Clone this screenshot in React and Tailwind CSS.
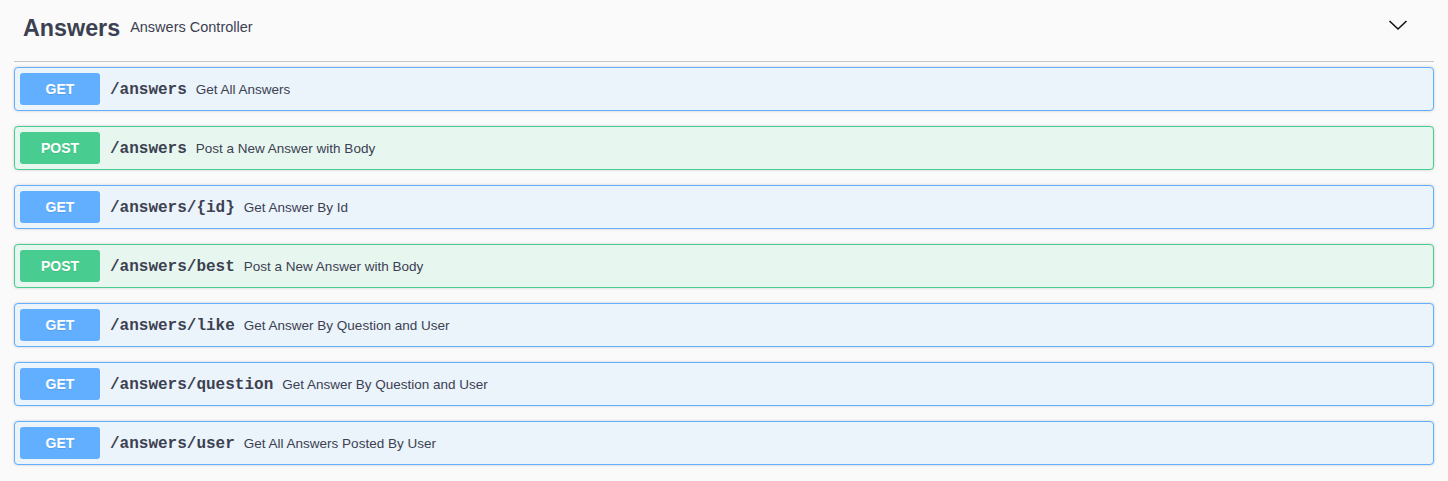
import React from "react";

const rows = [
  { m: "GET", p: "/answers", d: "Get All Answers" },
  { m: "POST", p: "/answers", d: "Post a New Answer with Body" },
  { m: "GET", p: "/answers/{id}", d: "Get Answer By Id" },
  { m: "POST", p: "/answers/best", d: "Post a New Answer with Body" },
  { m: "GET", p: "/answers/like", d: "Get Answer By Question and User" },
  { m: "GET", p: "/answers/question", d: "Get Answer By Question and User" },
  { m: "GET", p: "/answers/user", d: "Get All Answers Posted By User" },
];

function Row({ m, p, d }) {
  const get = m === "GET";
  return (
    <div
      className={
        "mb-[15px] flex items-center rounded-[4px] border p-[5px] shadow-[0_0_3px_rgba(0,0,0,0.19)] " +
        (get
          ? "border-[#61affe] bg-[#ebf3fb]"
          : "border-[#49cc90] bg-[#e8f6f0]")
      }
    >
      <div
        className={
          "flex h-[32px] min-w-[80px] items-center justify-center rounded-[3px] px-[15px] pt-[1px] text-[14px] font-bold text-white [text-shadow:0_1px_0_rgba(0,0,0,0.1)] " +
          (get ? "bg-[#61affe]" : "bg-[#49cc90]")
        }
        style={{ fontFamily: '"Liberation Sans", Arial, sans-serif' }}
      >
        {m}
      </div>
      <span
        className="mt-[2px] px-[10px] text-[16px] font-bold text-[#3b4151]"
        style={{ fontFamily: '"Liberation Mono", "Courier New", monospace' }}
      >
        {p}
      </span>
      <span className="-ml-[1px] mt-[2px] text-[13.5px] text-[#3b4151]">{d}</span>
    </div>
  );
}

export default function App() {
  return (
    <div
      className="min-h-[481px] w-full bg-[#fafafa] px-[14px]"
      style={{ fontFamily: '"Liberation Sans", Arial, sans-serif' }}
    >
      <div className="mb-[5px] flex items-center border-b border-[#c4c6ca] pb-[15px] pl-[9px] pr-[20px] pt-[10px]">
        <h3 className="text-[23.3px] font-bold leading-[36px] text-[#3b4151]">
          Answers
        </h3>
        <span className="px-[10px] text-[14.5px] text-[#3b4151]">
          Answers Controller
        </span>
        <div className="flex-1" />
        <svg width="20" height="20" viewBox="0 0 20 20" className="mr-[6px] mt-[-6px]">
          <polyline
            points="1.5,6 10,14 18.5,6"
            fill="none"
            stroke="#111"
            strokeWidth="1.6"
          />
        </svg>
      </div>
      {rows.map((r, i) => (
        <Row key={i} {...r} />
      ))}
    </div>
  );
}
